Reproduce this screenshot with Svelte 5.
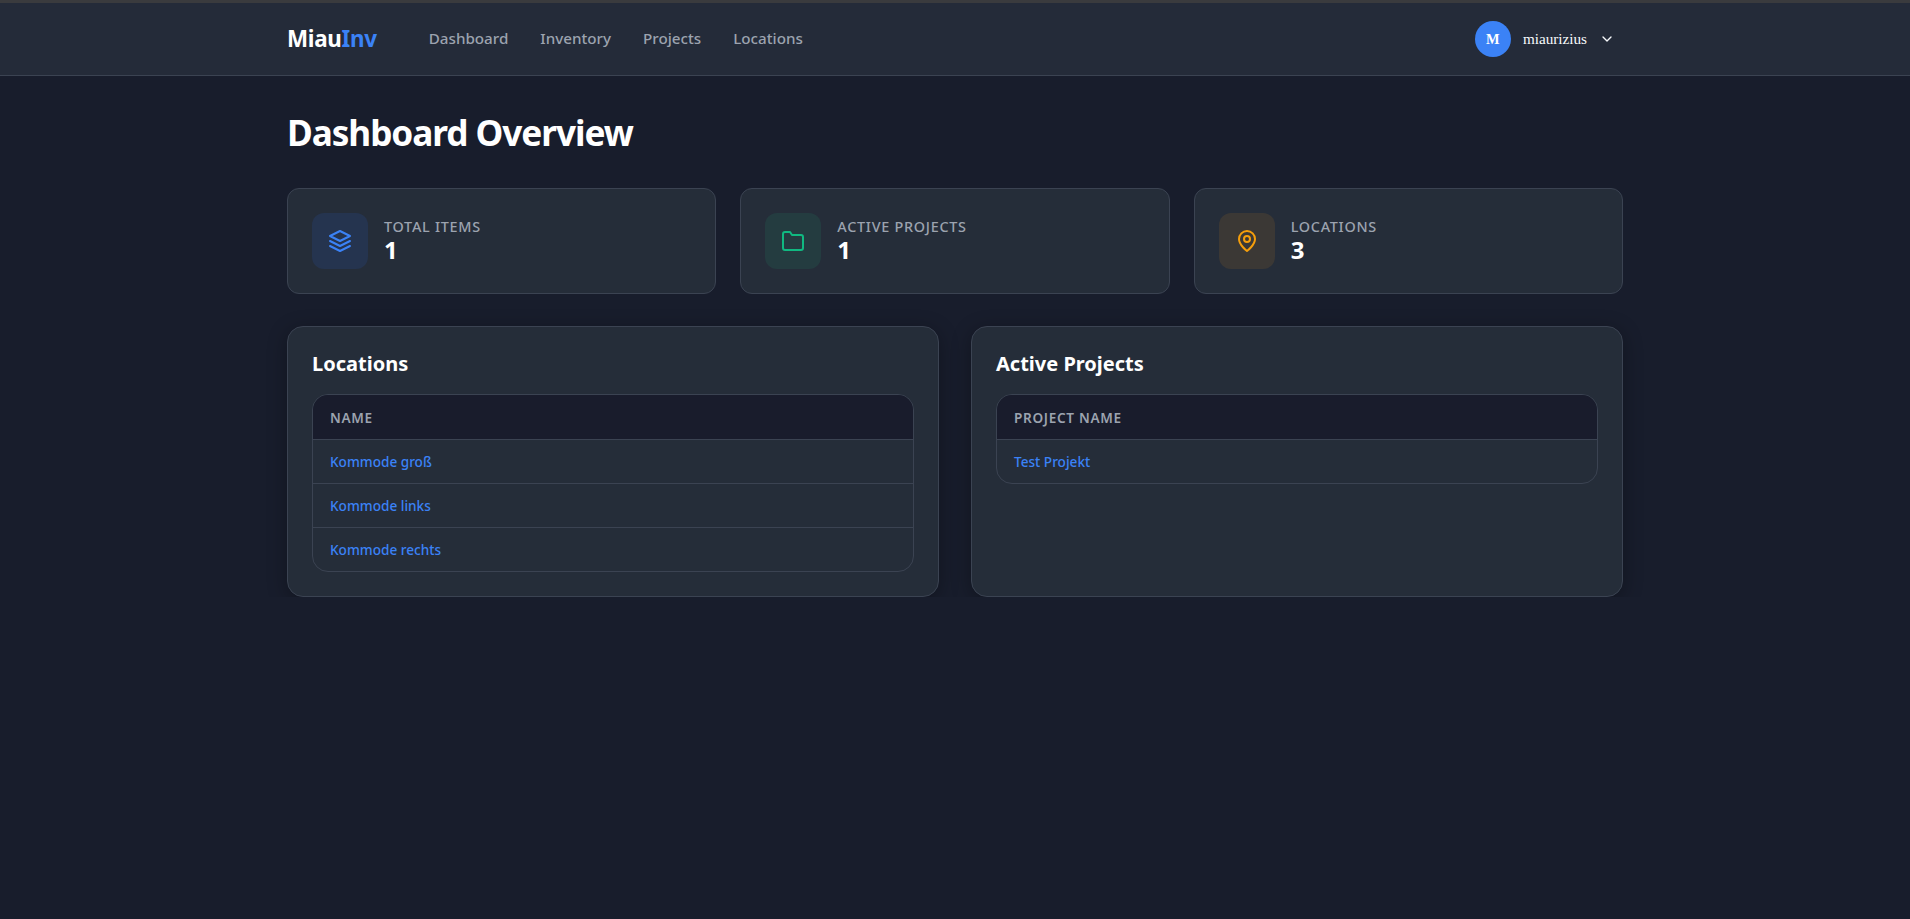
<script>
	const stats = [
		{ label: "Total Items", value: 1, tone: "blue", icon: "layers" },
		{ label: "Active Projects", value: 1, tone: "green", icon: "folder" },
		{ label: "Locations", value: 3, tone: "amber", icon: "pin" }
	]
	const locations = ["Kommode groß", "Kommode links", "Kommode rechts"]
	const projects = ["Test Projekt"]
	const nav = ["Dashboard", "Inventory", "Projects", "Locations"]
</script>

<div class="strip"></div>
<header>
	<div class="bar">
		<div class="left">
			<div class="logo">Miau<span>Inv</span></div>
			<nav>
				{#each nav as item}
					<a href="#top">{item}</a>
				{/each}
			</nav>
		</div>
		<div class="user">
			<div class="avatar">M</div>
			<span class="username">miaurizius</span>
			<svg class="chevron" viewBox="0 0 24 24" fill="none" stroke="currentColor" stroke-width="2" stroke-linecap="round" stroke-linejoin="round">
				<path d="m6 9 6 6 6-6" />
			</svg>
		</div>
	</div>
</header>

<main>
	<h1>Dashboard Overview</h1>

	<section class="stats">
		{#each stats as stat}
			<div class="stat">
				<div class="icon {stat.tone}">
					<svg viewBox="0 0 24 24" fill="none" stroke="currentColor" stroke-width="2" stroke-linecap="round" stroke-linejoin="round">
						{#if stat.icon === "layers"}
							<path d="M12 2 2 7l10 5 10-5-10-5z" />
							<path d="m2 17 10 5 10-5" />
							<path d="m2 12 10 5 10-5" />
						{:else if stat.icon === "folder"}
							<path d="M22 19a2 2 0 0 1-2 2H4a2 2 0 0 1-2-2V5a2 2 0 0 1 2-2h5l2 3h9a2 2 0 0 1 2 2z" />
						{:else}
							<path d="M20 10c0 6-8 12-8 12s-8-6-8-12a8 8 0 0 1 16 0z" />
							<circle cx="12" cy="10" r="3" />
						{/if}
					</svg>
				</div>
				<div>
					<div class="stat-label">{stat.label}</div>
					<div class="stat-value">{stat.value}</div>
				</div>
			</div>
		{/each}
	</section>

	<section class="panels">
		<div class="panel">
			<h2>Locations</h2>
			<div class="table-wrap">
				<table>
					<thead><tr><th>Name</th></tr></thead>
					<tbody>
						{#each locations as name}
							<tr><td><a href="#top">{name}</a></td></tr>
						{/each}
					</tbody>
				</table>
			</div>
		</div>
		<div class="panel">
			<h2>Active Projects</h2>
			<div class="table-wrap">
				<table>
					<thead><tr><th>Project Name</th></tr></thead>
					<tbody>
						{#each projects as name}
							<tr><td><a href="#top">{name}</a></td></tr>
						{/each}
					</tbody>
				</table>
			</div>
		</div>
	</section>
</main>

<style>
	:global(body) {
		background: #181d2c;
		color: #f8fafc;
		font-family: "Noto Sans", sans-serif;
	}

	.strip {
		height: 3px;
		background: #3a3b3e;
	}

	header {
		height: 72px;
		background: #242b39;
		border-bottom: 1px solid #3b4352;
	}

	.bar {
		max-width: 1336px;
		height: 100%;
		margin: 0 auto;
		display: flex;
		align-items: center;
		justify-content: space-between;
	}

	.left {
		display: flex;
		align-items: center;
		gap: 52px;
		padding-bottom: 2px;
	}

	.logo {
		font-size: 22.4px;
		font-weight: 700;
		letter-spacing: -0.3px;
		color: #fff;
	}

	.logo span {
		color: #3b82f6;
	}

	nav {
		display: flex;
		gap: 32px;
	}

	nav a {
		color: #9ca3af;
		font-size: 15.2px;
		font-weight: 500;
		text-decoration: none;
	}

	.user {
		display: flex;
		align-items: center;
		gap: 12px;
		padding-right: 8px;
	}

	.avatar {
		width: 36px;
		height: 36px;
		border-radius: 50%;
		background: #3b82f6;
		color: #fff;
		display: flex;
		align-items: center;
		justify-content: center;
		font-family: "Liberation Serif", serif;
		font-weight: 700;
		font-size: 14.4px;
	}

	.username {
		font-family: "Liberation Serif", serif;
		font-size: 15.2px;
		color: #f8fafc;
	}

	.chevron {
		width: 16px;
		height: 16px;
		color: #f8fafc;
	}

	main {
		max-width: 1336px;
		margin: 0 auto;
		padding-top: 32px;
	}

	h1 {
		margin: 0 0 32px;
		font-size: 35.2px;
		font-weight: 700;
		line-height: 48px;
		letter-spacing: -0.03em;
		color: #fff;
	}

	.stats {
		display: grid;
		grid-template-columns: repeat(3, 1fr);
		gap: 24px;
		margin-bottom: 32px;
	}

	.stat {
		display: flex;
		align-items: center;
		gap: 16px;
		padding: 24px;
		background: #252d39;
		border: 1px solid #3b4352;
		border-radius: 12px;
	}

	.icon {
		width: 56px;
		height: 56px;
		border-radius: 12px;
		display: flex;
		align-items: center;
		justify-content: center;
	}

	.icon svg {
		width: 24px;
		height: 24px;
	}

	.blue {
		background: #25344f;
		color: #3b82f6;
	}

	.green {
		background: #243c40;
		color: #10b981;
	}

	.amber {
		background: #3b3835;
		color: #f59e0b;
	}

	.stat-label {
		font-size: 14.4px;
		font-weight: 500;
		letter-spacing: 0.05em;
		line-height: 19px;
		text-transform: uppercase;
		color: #9ca3af;
		margin-top: -2px;
	}

	.stat-value {
		font-size: 24px;
		font-weight: 700;
		line-height: 28px;
		color: #fff;
	}

	.panels {
		display: grid;
		grid-template-columns: repeat(2, 1fr);
		gap: 32px;
	}

	.panel {
		padding: 24px;
		background: #252d39;
		border: 1px solid #3b4352;
		border-radius: 16px;
		box-shadow: 0 4px 20px rgba(0, 0, 0, 0.3);
	}

	h2 {
		margin: 0 0 18px;
		font-size: 20px;
		font-weight: 700;
		line-height: 25px;
		color: #fff;
	}

	.table-wrap {
		border: 1px solid #3b4352;
		border-radius: 16px;
		overflow: hidden;
	}

	table {
		width: 100%;
		border-collapse: collapse;
	}

	th {
		padding: 12px 17px;
		height: 20px;
		background: #191c2c;
		border-bottom: 1px solid #3b4352;
		text-align: left;
		font-size: 13.6px;
		font-weight: 600;
		letter-spacing: 0.05em;
		text-transform: uppercase;
		color: #9ca3af;
	}

	td {
		padding: 12px 17px;
		font-size: 13.6px;
		line-height: 19px;
		border-bottom: 1px solid #3b4352;
	}

	tr:last-child td {
		border-bottom: none;
	}

	td a {
		color: #3b82f6;
		text-decoration: none;
		font-weight: 500;
	}
</style>
